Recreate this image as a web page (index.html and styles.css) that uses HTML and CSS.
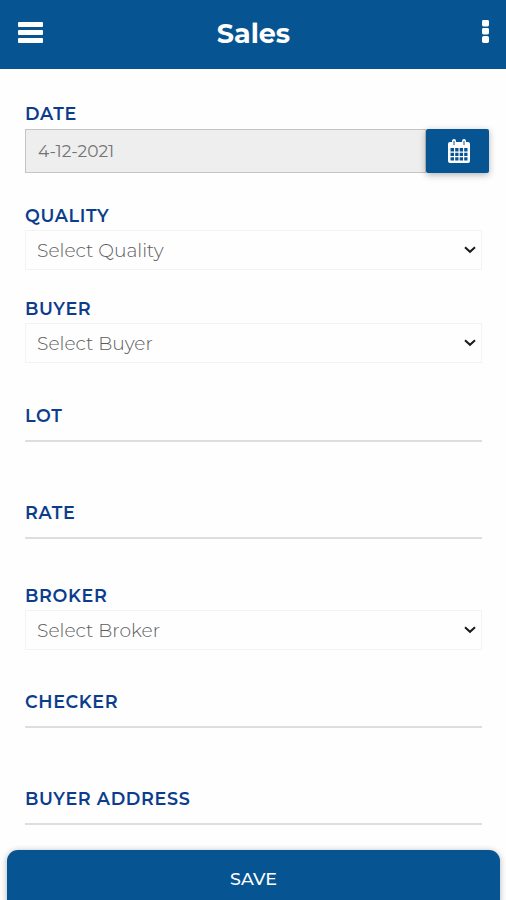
FILE: index.html
```html
<!DOCTYPE html>
<html lang="en">
<head>
    <meta charset="UTF-8">
    <meta name="viewport" content="width=device-width, initial-scale=1.0">
    <title>Sales</title>
    <link rel="stylesheet" href="styles.css">
</head>
<body>
    <header class="topbar">
        <svg class="menu-icon" width="25" height="21" viewBox="0 0 25 21">
            <rect x="0" y="0" width="25" height="5" rx="1"/>
            <rect x="0" y="8" width="25" height="5" rx="1"/>
            <rect x="0" y="16" width="25" height="5" rx="1"/>
        </svg>
        <h1>Sales</h1>
        <svg class="more-icon" width="7" height="23" viewBox="0 0 7 23">
            <rect x="0" y="0" width="7" height="6.5" rx="1.4"/>
            <rect x="0" y="8" width="7" height="6.5" rx="1.4"/>
            <rect x="0" y="16" width="7" height="7" rx="1.8"/>
        </svg>
    </header>

    <form class="sales-form">
        <div class="field">
            <label for="date">DATE</label>
            <div class="date-group">
                <input type="text" id="date" value="4-12-2021" readonly>
                <button type="button" class="date-button">
                    <svg width="22" height="24" viewBox="0 0 22 24">
                        <path fill="#fff" d="M2 3h2V2a2 2 0 0 1 4 0v1h6V2a2 2 0 0 1 4 0v1h2a2 2 0 0 1 2 2v17a2 2 0 0 1-2 2H2a2 2 0 0 1-2-2V5a2 2 0 0 1 2-2z"/>
                        <path fill="#075493" d="M5.5 2h1v4h-1zM15.5 2h1v4h-1z"/>
                        <path fill="#075493" d="M2.5 9h3.5v3.5H2.5zM7.2 9h3.3v3.5H7.2zM11.7 9H15v3.5h-3.3zM16.2 9h3.3v3.5h-3.3zM2.5 13.7h3.5V17H2.5zM7.2 13.7h3.3V17H7.2zM11.7 13.7H15V17h-3.3zM16.2 13.7h3.3V17h-3.3zM2.5 18.2h3.5v3.3H2.5zM7.2 18.2h3.3v3.3H7.2zM11.7 18.2H15v3.3h-3.3zM16.2 18.2h3.3v3.3h-3.3z"/>
                    </svg>
                </button>
            </div>
        </div>

        <div class="field select-field">
            <label for="quality">QUALITY</label>
            <div class="select-box">
                <select id="quality"><option>Select Quality</option></select>
                <svg class="arrow" width="12" height="8" viewBox="0 0 12 8"><path d="M1 1.2l5 4.6 5-4.6"/></svg>
            </div>
        </div>

        <div class="field select-field buyer">
            <label for="buyer">BUYER</label>
            <div class="select-box">
                <select id="buyer"><option>Select Buyer</option></select>
                <svg class="arrow" width="12" height="8" viewBox="0 0 12 8"><path d="M1 1.2l5 4.6 5-4.6"/></svg>
            </div>
        </div>

        <div class="field text-field lot">
            <label for="lot">LOT</label>
            <input type="text" id="lot">
        </div>

        <div class="field text-field">
            <label for="rate">RATE</label>
            <input type="text" id="rate">
        </div>

        <div class="field select-field broker">
            <label for="broker">BROKER</label>
            <div class="select-box">
                <select id="broker"><option>Select Broker</option></select>
                <svg class="arrow" width="12" height="8" viewBox="0 0 12 8"><path d="M1 1.2l5 4.6 5-4.6"/></svg>
            </div>
        </div>

        <div class="field text-field checker">
            <label for="checker">CHECKER</label>
            <input type="text" id="checker">
        </div>

        <div class="field text-field">
            <label for="address">BUYER ADDRESS</label>
            <input type="text" id="address">
        </div>

        <button type="button" class="save-button">SAVE</button>
    </form>
</body>
</html>
```
FILE: styles.css
```css
* {
    box-sizing: border-box;
}

body {
    font-family: Montserrat, Inter, sans-serif;
    background-color: #fefefe;
    margin: 0;
    height: 900px;
    overflow: hidden;
}

.topbar {
    display: flex;
    justify-content: space-between;
    height: 69px;
    padding: 0 17px 0 18px;
    background-color: #075493;
}

.topbar svg {
    fill: white;
}

.menu-icon {
    margin-top: 22px;
}

.more-icon {
    margin: 20px 0 0 18px;
}

h1 {
    margin: 0;
    color: white;
    font-size: 27px;
    font-weight: 700;
    line-height: 68px;
}

.sales-form {
    padding: 34px 24px 0 25px;
}

label {
    display: block;
    height: 22px;
    line-height: 22px;
    font-size: 17.6px;
    font-weight: 600;
    letter-spacing: 0.64px;
    color: #0b3d8c;
}

input, select, button {
    font-family: inherit;
    border-radius: 0;
    outline: none;
}

.date-group {
    display: flex;
    height: 44px;
    margin: 4px -7px 0 0;
}

.date-group input {
    flex: 1;
    min-width: 0;
    padding: 0 12px;
    border: 1px solid #c4c4c4;
    background-color: #eeeeee;
    color: #747474;
    font-size: 17px;
    font-weight: 400;
}

.date-button {
    display: flex;
    align-items: center;
    justify-content: center;
    width: 63px;
    padding: 0 0 1px 2px;
    border: none;
    border-radius: 2px;
    background-color: #075493;
    box-shadow: 0 2px 7px rgba(0, 0, 0, 0.3);
}

.select-field {
    margin-top: 32px;
}

.select-field.buyer {
    margin-top: 28px;
}

.select-field.broker {
    margin-top: 46px;
}

.select-box {
    display: flex;
    align-items: center;
    height: 40px;
    margin-top: 3px;
    padding: 0 5px 0 11px;
    border: 1px solid #f3f3f3;
}

select {
    flex: 1;
    appearance: none;
    padding: 0;
    border: none;
    background: none;
    color: #5c5c5c;
    font-size: 18.7px;
    font-weight: 300;
}

.arrow path {
    fill: none;
    stroke: #1a1a1a;
    stroke-width: 2;
}

.text-field {
    margin-top: 60px;
}

.text-field.lot {
    margin-top: 42px;
}

.text-field.checker {
    margin-top: 41px;
}

.text-field input {
    display: block;
    width: 100%;
    height: 15px;
    padding: 0;
    border: none;
    border-bottom: 2px solid #dddfdf;
    background: none;
}

.save-button {
    display: block;
    width: 493px;
    height: 60px;
    margin: 25px 0 0 -18px;
    padding: 0 0 3px;
    border: none;
    border-radius: 11px;
    background-color: #075493;
    box-shadow: 0 1px 6px rgba(0, 0, 0, 0.3);
    color: white;
    font-size: 17.5px;
    font-weight: 500;
}
```
